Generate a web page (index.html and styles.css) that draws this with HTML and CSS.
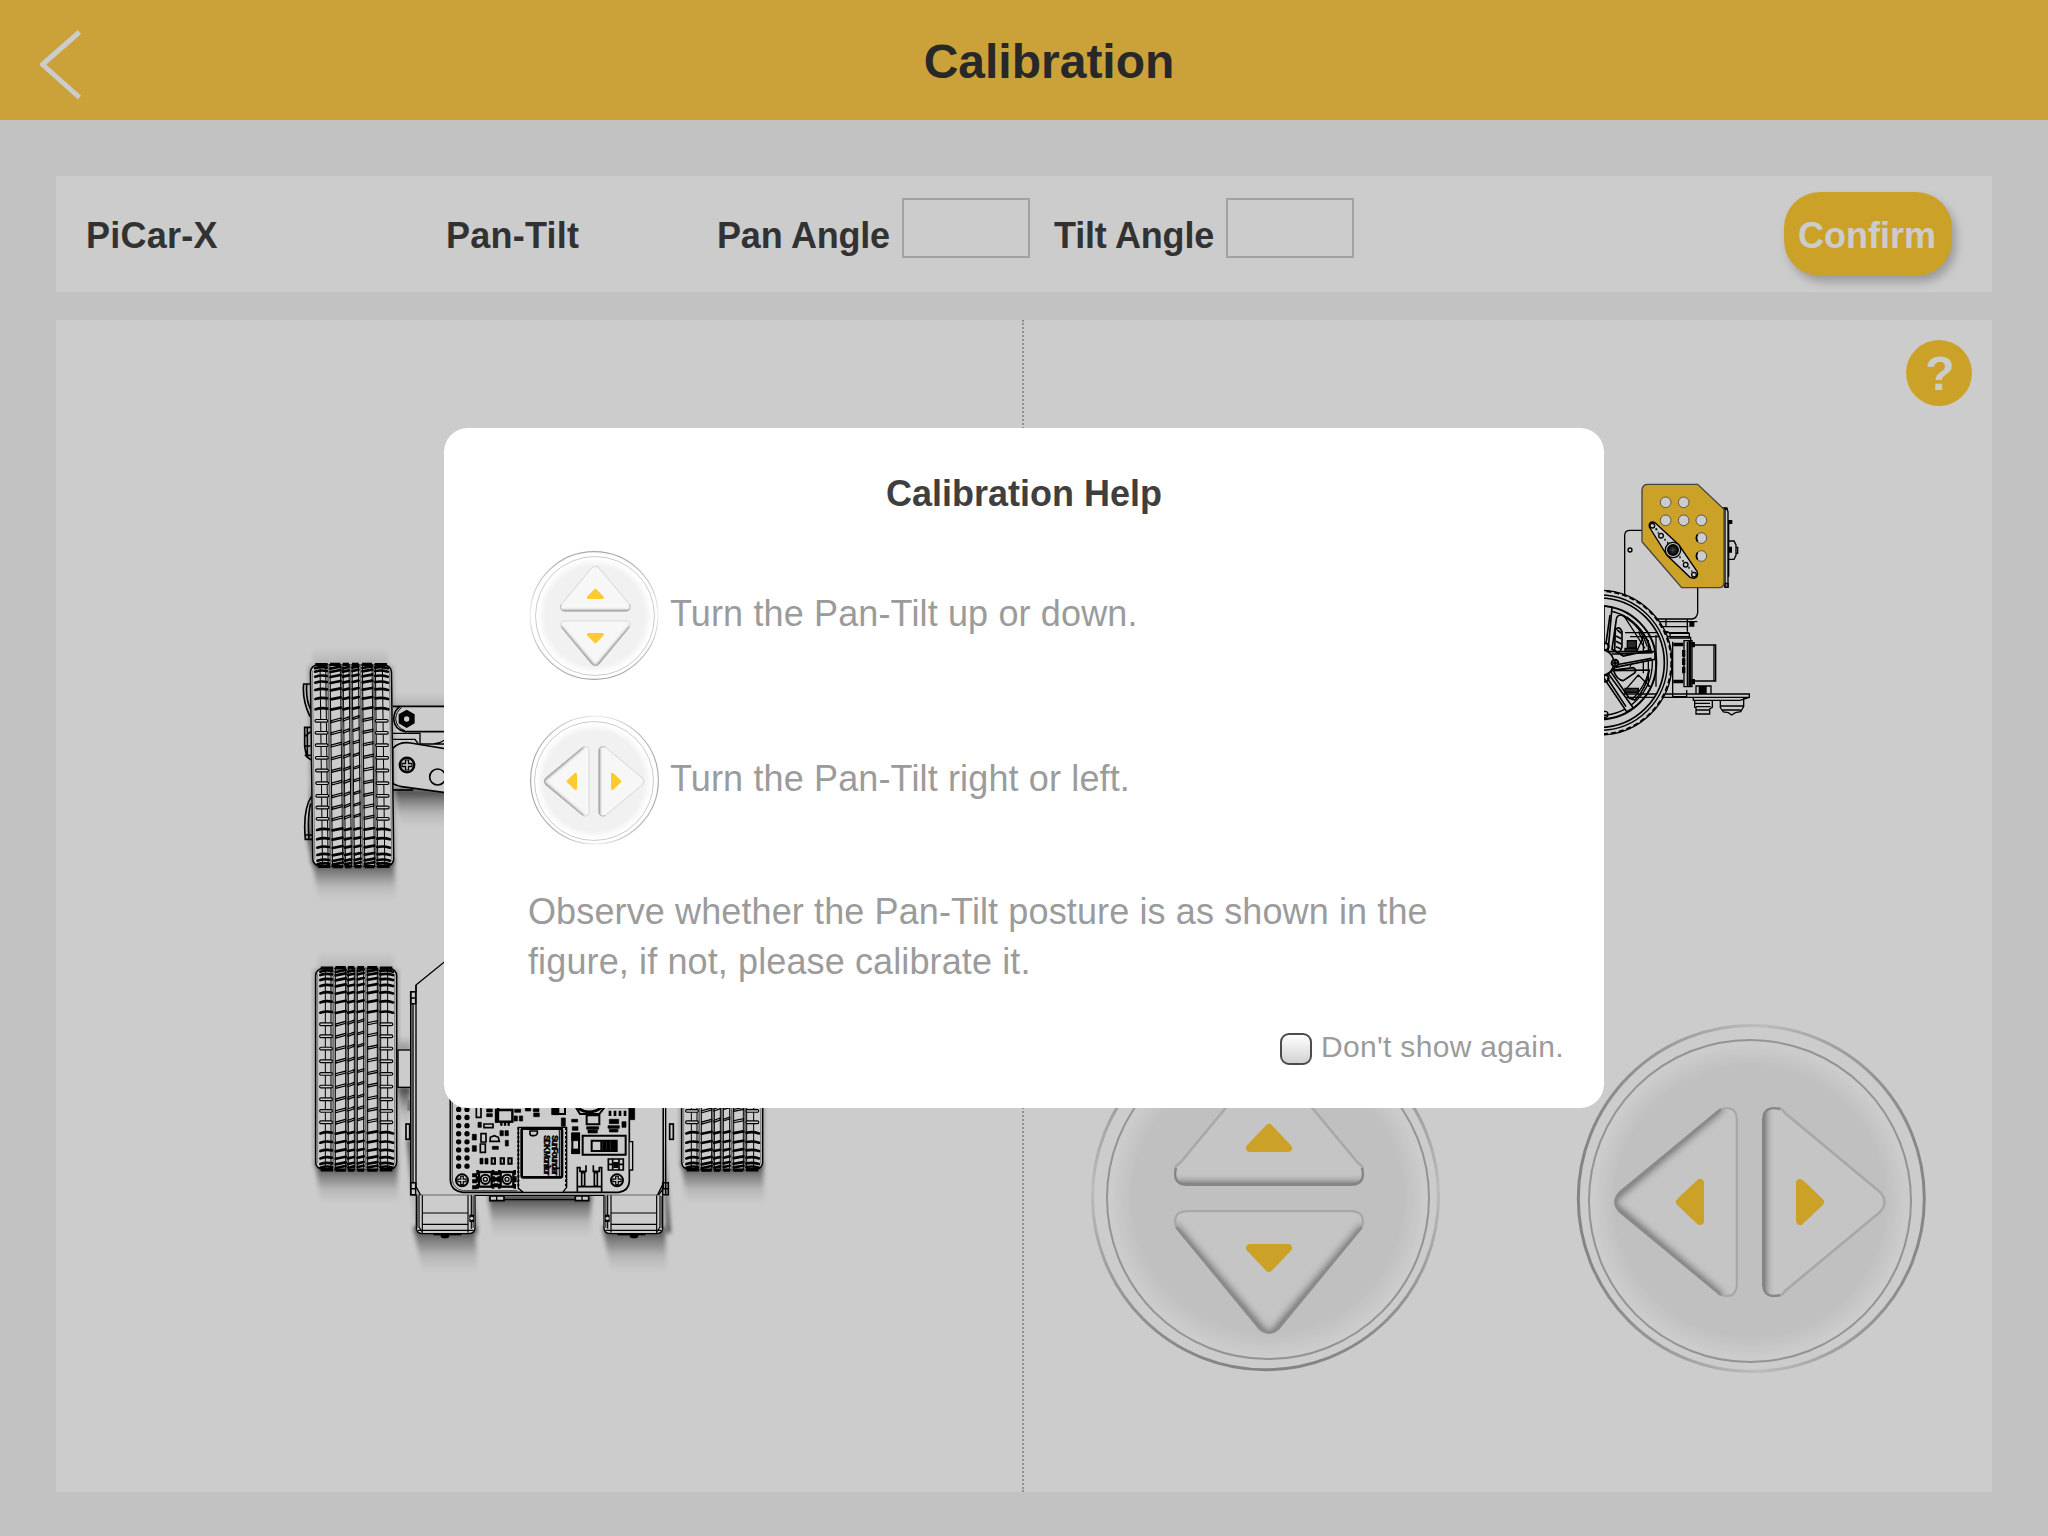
FILE: index.html
```html
<!DOCTYPE html>
<html lang="en">
<head>
<meta charset="utf-8">
<title>Calibration</title>
<link rel="stylesheet" href="styles.css">
</head>
<body>
<svg class="defs" aria-hidden="true">
  <defs>
    <linearGradient id="fall" x1="0" y1="0" x2="0" y2="1"><stop offset="0" stop-color="#000" stop-opacity=".7"/><stop offset=".3" stop-color="#000" stop-opacity=".38"/><stop offset=".65" stop-color="#000" stop-opacity=".1"/><stop offset="1" stop-color="#000" stop-opacity="0"/></linearGradient>
    <linearGradient id="rise" x1="0" y1="1" x2="0" y2="0"><stop offset="0" stop-color="#000" stop-opacity=".3"/><stop offset="1" stop-color="#000" stop-opacity="0"/></linearGradient>
    <filter id="soft" x="-20%" y="-20%" width="140%" height="140%"><feGaussianBlur stdDeviation="6"/></filter>
    <filter id="bevel" filterUnits="userSpaceOnUse" x="-150" y="-170" width="300" height="340"><feGaussianBlur stdDeviation="4"/></filter>
    <radialGradient id="dish"><stop offset="0" stop-color="#f1f1f1"/><stop offset=".84" stop-color="#f1f1f1"/><stop offset=".97" stop-color="#fff"/></radialGradient>
    <linearGradient id="rim" x1="0" y1="0" x2="0" y2="1"><stop offset="0" stop-color="#a8a8a8"/><stop offset=".25" stop-color="#c8c8c8"/><stop offset=".48" stop-color="#ececec"/><stop offset=".75" stop-color="#c0c0c0"/><stop offset="1" stop-color="#a4a4a4"/></linearGradient>
    <clipPath id="upClip"><path d="M-82 -12.7H84Q101 -15 92 -33L11 -130Q1 -141 -9 -130L-90 -33Q-99 -15 -82 -12.7Z"/></clipPath>
    <clipPath id="downClip"><path d="M-82 12.7H84Q101 15 92 33L11 130Q1 141 -9 130L-90 33Q-99 15 -82 12.7Z"/></clipPath>
    <symbol id="pad" viewBox="-176 -176 352 352" overflow="visible">
      <circle cx="-2.5" cy="-1.3" r="173" fill="#fff" stroke="url(#rim)" stroke-width="3"/>
      <circle r="161" fill="url(#dish)" stroke="#b9b9b9" stroke-width="2"/>
      <g clip-path="url(#upClip)">
        <rect x="-110" y="-150" width="220" height="150" fill="#f7f7f7"/>
        <path d="M-110 -10H110" stroke="#666" stroke-width="10" filter="url(#bevel)"/>
      </g>
      <path d="M-92 -29Q-94 -31 -88 -35L-9 -130Q1 -139 11 -130L90 -35Q96 -31 94 -29" fill="none" stroke="#d5d3cf" stroke-width="2.600"/>
      <path d="M-92 -30Q-96 -14 -82 -13.2H84Q98 -14 94 -30" fill="none" stroke="#a8a7a5" stroke-width="2.400"/>
      <g clip-path="url(#downClip)">
        <rect x="-110" y="0" width="220" height="150" fill="#f7f7f7"/>
        <path d="M-96 30L1 145L98 30" fill="none" stroke="#777" stroke-width="10" filter="url(#bevel)"/>
      </g>
      <path d="M-92 29Q-96 14 -82 13.2H84Q98 14 94 29" fill="none" stroke="#d3d1cd" stroke-width="2.200"/>
      <path d="M-92 29L-9 130Q1 139 11 130L94 29" fill="none" stroke="#b0aeaa" stroke-width="2.400"/>
      <path class="accent" d="M-18 -50L1 -70L20 -50Z"/>
      <path class="accent" d="M-18 50H20L1 70Z"/>
    </symbol>

    <!-- tyre seen from above, 250 x 616 units -->
    <g id="bar" fill="#fff" stroke="#000" stroke-width="3.600">
      <rect x="14" y="-3.500" width="38" height="8" rx="3.500"/>
      <path d="M62 6L92 -2V-8L62 0ZM99 1L117 -6V-12L99 -5ZM128 -4L146 -9V-15L128 -9ZM158 2L187 -4V-10L158 -4Z"/>
      <rect x="195" y="-3.500" width="38" height="8" rx="3.500"/>
    </g>
    <g id="band" fill="none" stroke="#000" stroke-width="8" stroke-linecap="round">
      <path d="M16 2Q34 -4 51 0M62 3L92 -3M99 2L117 -2M128 0L146 -4M158 1L187 -4M196 0Q215 -4 234 2"/>
    </g>
    <g id="tyre">
      <rect x="2" y="6" width="243" height="603" rx="22" fill="#fff" stroke="#000" stroke-width="4.500"/>
      <g fill="none" stroke="#000" stroke-width="3">
        <path d="M31 4V610M48 4V610M61 4V610M92 4V610M100 4V610M118 4V610M127 4V610M146 4V610M158 4V610M187 4V610M197 4V610M218 4V610"/>
        <path d="M8 22V590M239 22V590" stroke-width="1.200"/>
      </g>
      <path d="M55 4V610M96 4V610M123 4V610M152 4V610M192 4V610" stroke="#888" stroke-width="6"/>
      <path d="M17 5H54M61 4H92M99 4H118M127 4H147M157 4H187M195 5H232M17 610H54M61 611H92M99 611H118M127 611H147M157 611H187M195 610H232" stroke="#000" stroke-width="10"/>
      <use href="#band" y="14"/><use href="#band" y="24"/><use href="#band" y="39"/><use href="#band" y="57"/><use href="#band" y="79"/><use href="#band" y="106"/><use href="#band" y="137"/>
      <use href="#bar" y="173"/><use href="#bar" y="209"/><use href="#bar" y="246"/><use href="#bar" y="284"/><use href="#bar" y="322"/><use href="#bar" y="360"/><use href="#bar" y="398"/><use href="#bar" y="433"/><use href="#bar" y="467"/>
      <use href="#band" y="499"/><use href="#band" y="527"/><use href="#band" y="552"/><use href="#band" y="574"/><use href="#band" y="591"/><use href="#band" y="602"/>
    </g>
    <g id="tyreShade">
      <path d="M10 -45H235V10H10Z" fill="url(#rise)" opacity=".4" filter="url(#soft)"/>
      <rect x="-3" y="10" width="252" height="590" fill="#000" opacity=".28" filter="url(#soft)"/>
      <path d="M2 590H246L250 710H16Z" fill="url(#fall)" filter="url(#soft)"/>
    </g>
    <g id="screw"><circle r="18" fill="#fff" stroke="#000" stroke-width="6"/><path d="M-14 0H14M0 -14V14" stroke="#000" stroke-width="11"/><path d="M-11 0H11M0 -11V11" stroke="#fff" stroke-width="4"/></g>
    <g id="button"><rect x="-19" y="-22" width="38" height="44" fill="#fff" stroke="#000" stroke-width="7"/><path d="M-23 -28V-14M23 -28V-14M-23 28V14M23 28V14M-25 -9V9M25 -9V9" stroke="#000" stroke-width="8"/><circle r="14" fill="#fff" stroke="#000" stroke-width="6"/><circle r="6" fill="#fff" stroke="#000" stroke-width="4"/></g>
    <g id="foot">
      <path d="M0 0V98Q0 113 18 115H158Q176 113 176 98V0" fill="#fff" stroke="#000" stroke-width="4"/>
      <path d="M8 0V95L18 110M18 0V115M155 0V112M165 0V100M18 53H155M18 87H155M5 105H172" fill="none" stroke="#000" stroke-width="3.500"/>
      <path d="M2 2H7V98H2ZM168 2H174V98H168Z" fill="#777"/>
      <path d="M52 117H135" stroke="#000" stroke-width="6"/><ellipse cx="86" cy="122" rx="13" ry="7"/>
      <path d="M159 58h14v22h-14z"/><circle cx="166" cy="69" r="5" fill="#fff"/>
    </g>
  </defs>
</svg>

<div class="app">
  <header class="header">
    <button class="back" aria-label="Back"><svg width="44" height="72" viewBox="0 0 44 72"><path d="M39.500 3L2.500 35.500L39.500 68.500" fill="none" stroke="#fff" stroke-width="5"/></svg></button>
    <h1 class="heading">Calibration</h1>
  </header>

  <main class="main">
    <section class="toolbar">
      <span class="label wide">PiCar-X</span>
      <span class="label wide">Pan-Tilt</span>
      <label class="label tight" for="pan">Pan Angle</label>
      <input class="angle" id="pan">
      <label class="label tight" for="tilt">Tilt Angle</label>
      <input class="angle" id="tilt">
      <button class="confirm">Confirm</button>
    </section>

    <section class="stage">
      <div class="half half-left">
        <svg class="art" viewBox="56 320 966 1172">
          <!-- front wheel and steering arm -->
          <g transform="translate(290 640) scale(.33333)">
            <path d="M312 445L520 450V560H330Z" fill="url(#fall)" filter="url(#soft)"/>
            <path d="M310 160H520V205H310Z" fill="url(#rise)" opacity=".5" filter="url(#soft)"/>
            <path d="M40 340L66 470L52 600L72 690L60 440Z" fill="#000" opacity=".5" filter="url(#soft)"/>
            <path d="M60 132H41Q36 180 60 230M50 134Q47 180 62 208M62 262H44V320L50 350L64 360M44 290L62 275M44 318H62M44 346H62M52 262V350M64 470Q38 510 46 598H68M62 490Q52 530 57 595M46 585H66" fill="none" stroke="#000" stroke-width="5"/>
            <path d="M308 199H520V275H345Q313 268 311 237Q313 208 330 200Z" fill="#fff" stroke="#000" stroke-width="5"/>
            <path d="M335 203Q318 215 317 237Q319 262 345 272" fill="none" stroke="#000" stroke-width="3"/>
            <path d="M308 280H390V312H520M308 298H375L385 312M390 280V312M430 312Q450 310 465 300" fill="none" stroke="#000" stroke-width="4"/>
            <path d="M308 325Q330 304 362 309L520 335V465L335 440Q315 435 308 430Z" fill="#fff" stroke="#000" stroke-width="5"/>
            <path d="M308 450H370" stroke="#000" stroke-width="5"/>
            <path d="M350 209L374 223V250L350 264L326 250V223Z"/><circle cx="350" cy="237" r="8" fill="#fff"/>
            <use href="#screw" transform="translate(351 375) scale(1.200)"/>
            <circle cx="443" cy="411" r="24" fill="#fff" stroke="#000" stroke-width="5"/>
            <g transform="translate(59 69) skewX(.7)"><use href="#tyreShade"/><use href="#tyre"/></g>
          </g>
          <!-- rear wheels -->
          <g transform="translate(315 966.400) scale(.33333)"><use href="#tyreShade"/><use href="#tyre"/></g>
          <g transform="translate(681 966.400) scale(.33333)"><use href="#tyreShade"/><use href="#tyre"/></g>
          <!-- chassis -->
          <g transform="translate(300 940) scale(.33333)">
            <path d="M295 440H332V560H306Z" fill="url(#fall)" filter="url(#soft)"/>
            <path d="M294 290H332V332H294Z" fill="url(#rise)" filter="url(#soft)"/>
            <path d="M340 860H525L533 995H368Z" fill="url(#fall)" filter="url(#soft)"/>
            <path d="M908 860H1095L1100 995H932Z" fill="url(#fall)" filter="url(#soft)"/>
            <path d="M565 765H875L870 890H580Z" fill="url(#fall)" filter="url(#soft)"/>
            <path d="M322 600L352 900L340 760L334 600ZM520 770L532 880L524 880ZM1088 560L1112 880H1100Z" fill="#000" opacity=".7" filter="url(#soft)"/>
            <rect x="294" y="330" width="38" height="112" fill="#fff" stroke="#000" stroke-width="4"/>
            <rect x="318" y="552" width="11" height="46" fill="#fff" stroke="#000" stroke-width="5"/>
            <rect x="322" y="480" width="10" height="32" fill="#999"/>
            <path d="M348 135L450 52H1000L1090 130V745L1075 766H360L332 764V155H348Z" fill="#fff" stroke="#000" stroke-width="4"/>
            <path d="M348 135V740L362 766M339 190V730M332 155V764M1097 150V765M1090 150V730L1072 766" fill="none" stroke="#000" stroke-width="4"/>
            <path d="M332 155h15v36h-15zM332 174h15M332 728h15v36h-15zM332 746h15M1088 728h17v36h-17zM1088 746h17" fill="none" stroke="#000" stroke-width="4.500"/>
            <rect x="1109" y="552" width="11" height="46" fill="#fff" stroke="#000" stroke-width="5"/>
            <path d="M570 768h42v14h-42zM826 768h40v14h-40z" fill="#fff" stroke="#000" stroke-width="5"/>
            <path d="M612 779H826M590 768v14M846 768v14" stroke="#000" stroke-width="4"/>
            <use href="#foot" x="349" y="766"/>
            <use href="#foot" transform="translate(1088 766) scale(-1 1)"/>
          </g>
          <!-- controller board -->
          <g transform="translate(430 1090) scale(.33333)">
            <path d="M61 0V270Q63 303 98 307H566Q596 303 598 275V0Z" fill="#fff" stroke="#000" stroke-width="5"/>
            <path d="M67 0V270Q70 297 100 302H262" fill="none" stroke="#000" stroke-width="2"/>
            <path d="M86 34V230M111 34V230" stroke="#000" stroke-width="16" stroke-linecap="round" stroke-dasharray="0 24.300" fill="none"/>
            <use href="#screw" x="96" y="271"/><use href="#screw" x="561" y="271"/>
            <use href="#button" x="166" y="268"/><use href="#button" x="231" y="268"/>
            <path d="M198 244v12M198 262v12M198 280v12M134 250v12M134 268v12M134 286v12" stroke="#000" stroke-width="15"/>
            <!-- small parts -->
            <g fill="#fff" stroke="#000" stroke-width="5">
              <path d="M139 50h14v32h-14zM198 60h49v35h-49zM162 102h27v11h-27zM153 131h15v25h-15zM151 162h15v25h-15zM181 142l12 -5 12 5 3 12h-28z"/>
              <path d="M198 60h49v35h-49zM204 53v44M214 95v12M225 95v12M236 95v12" stroke-width="7"/>
              <path d="M185 205h10v16h-10zM212 205h10v16h-10zM235 205h10v16h-10z" stroke-width="6"/>
            </g>
            <path stroke="#000" stroke-width="2" d="M170 57h17v9h-17zM170 71h17v9h-17zM144 97h10v15h-10zM127 133h12v17h-12zM127 167h12v17h-12zM210 122h10v15h-10zM225 122h10v15h-10zM226 151h9v17h-9zM187 169h18v9h-18zM150 205h9v17h-9zM165 205h9v17h-9zM252 78h10v15h-10zM268 78h10v15h-10zM254 58h18v9h-18zM286 54h16v9h-16zM310 56h17v9h-17zM311 69h17v11h-17z"/>
            <!-- wireless module -->
            <path d="M265 112H410V292L398 307H280L265 295Z" fill="#fff" stroke="#000" stroke-width="4"/>
            <path d="M265 112V290M408 112V290" stroke="#000" stroke-width="6" stroke-dasharray="8 5"/>
            <rect x="275" y="116" width="121" height="146" rx="5" fill="#fff" stroke="#000" stroke-width="8"/>
            <path d="M300 123h22v8q-3 6 -9 6h-5q-8 0 -8 -6z" fill="#fff" stroke="#000" stroke-width="5"/>
            <g class="chip-text"><text transform="translate(366 136) rotate(90)" textLength="120">SunFounder</text><text transform="translate(341 136) rotate(90)" textLength="120">SDK Monitor</text></g>
            <path d="M388 120V260" stroke="#000" stroke-width="3"/>
            <!-- components above the switch -->
            <g fill="#fff" stroke="#000" stroke-width="6">
              <path d="M372 20h33v52h-33zM430 40L450 72H508L525 50M470 76h38v27h-38zM533 52h62V20"/>
              <path d="M445 55Q480 78 515 52M540 62v16M555 62v16M570 62v16M585 62v16" fill="none" stroke-width="8"/>
              <path d="M427 132h20v57h-20z"/>
              <path d="M458 137h129v57H458z"/><path d="M485 152h75v31h-75z"/>
              <path d="M599 155h9v85h-9" stroke-width="4"/>
            </g>
            <path stroke="#000" stroke-width="2" d="M365 45h22v29h-22zM512 152h48v31h-48zM425 128h24v24h-24zM425 177h24v14h-24zM470 110h36v8h-36zM474 120h28v9h-28zM538 88h28v13h-28zM534 107h34v8h-34zM538 118h26v8h-26zM576 95h12v17h-12zM425 88h18v8h-18zM427 110h17v11h-17zM394 84h12v25h-12zM599 55h15v34h-15z"/>
            <path d="M517 153v28M529 153v28M541 153v28" stroke="#444" stroke-width="2"/>
            <path d="M535 207h45v33h-45zM548 207v33M567 207v33M535 223h45" fill="#fff" stroke="#000" stroke-width="5"/><path d="M550 216h15v18h-15z"/>
            <path d="M442 305V233H450V244H468V226M515 305V233H508V244H490V226M468 226V244M490 226V244M442 290H515M455 248h9v40h-9zM493 248h9v40h-9z" fill="none" stroke="#000" stroke-width="5"/>
          </g>
        </svg>
      </div>

      <div class="half half-right">
        <button class="help" aria-label="Help">?</button>
        <svg class="side" viewBox="1024 406 968 616">
          <g transform="translate(1590 470) scale(.33333)" fill="none" stroke="#000" stroke-width="4">
            <path d="M104 375V195Q105 181 120 181H156M323 350V428Q321 445 306 447H200"/>
            <circle cx="120" cy="240" r="6"/>
            <!-- camera edge -->
            <path d="M396 114H410L414 125V350H405V120M416 150V320M414 213H432L438 225V256L432 268H414M438 232h5v18h-5"/>
            <path d="M416 150h11v12h-11zM416 230h10v18h-10zM398 113h15v7h-15z" fill="#000" stroke="none"/>
            <path d="M405 340h9v12h-9z" fill="#888"/>
            <!-- pan-tilt plate -->
            <path d="M172 43H323L402 118V340Q400 353 388 353H275L156 215V60Q157 44 172 43Z" fill="#ffca31" stroke="#555"/>
            <g fill="#fff" stroke="#555" stroke-width="2.500"><circle cx="227" cy="97" r="16"/><circle cx="281" cy="97" r="16"/><circle cx="227" cy="151" r="16"/><circle cx="281" cy="151" r="16"/><circle cx="334" cy="151" r="16"/><circle cx="334" cy="204" r="16"/><circle cx="334" cy="258" r="16"/></g>
            <path d="M323 193Q316 204 323 215M323 247Q316 258 323 269" stroke-width="5"/>
            <path d="M178 171Q175 155 190 156L197 160L267 225L321 304Q327 321 312 325L300 322L231 256Z" fill="#fff"/>
            <g stroke-width="4"><circle cx="187" cy="167" r="7"/><circle cx="213" cy="197" r="7"/><circle cx="287" cy="284" r="7"/><circle cx="312" cy="314" r="7"/><path d="M196 178h3v3M203 188h3M223 209h4M231 218h4M268 262h4M277 273h4M295 293h4M304 304h3" stroke-width="6"/></g>
            <circle cx="249" cy="240" r="23" fill="#fff"/><circle cx="249" cy="240" r="15" fill="#222" stroke-width="6"/><path d="M241 240h16M249 232v16" stroke="#777" stroke-width="2"/>
            <!-- body -->
            <path d="M200 455H322M210 470H295M228 447V470M292 447V485M105 488H297M120 500H297M292 515V650M302 500V650M210 488Q230 480 240 490M248 515V680M160 515V610M175 510V650M198 495V650M120 590L160 500M145 485L160 515"/>
            <path d="M240 490h58v14h-58zM282 512h16v138h-16zM297 512h9v138h-9zM309 525H377V633H309M372 525V633"/>
            <path d="M298 455h15v15h-15zM250 518h30v11h-30zM304 516h11v16h-11zM250 629h30v11h-30zM304 627h11v16h-11zM276 540h10v20h-10zM276 565h10v20h-10zM276 590h10v20h-10z" fill="#000" stroke="none"/>
            <path d="M112 512h27v22h-27zM105 535h35v12h-35zM105 655h40v12h-40z" fill="#333"/>
            <path d="M90 672H478V682H90M318 672V648H363V672M310 682V691H450L478 682M314 691V712H318V732H359V717L367 712V693M314 700H360M318 710H362M318 720H358M391 693V713L400 726L415 728L425 735L436 728L452 725L461 710V682M391 708H461M398 720H452M248 680H290V660M110 655L145 615L180 650"/>
            <path d="M328 650h20v20h-20z" fill="#000"/>
            <!-- wheel -->
            <g>
              <path d="M29 361A217 217 0 0 1 29 795A217 217 0 0 1 29 361M29 384A194 194 0 0 0 29 772A194 194 0 0 0 29 384" fill="#fff" stroke="none"/>
              <path d="M29 361A217 217 0 0 1 29 795M29 375A203 203 0 0 1 29 781" stroke-width="4"/>
              <circle cx="29" cy="578" r="215" stroke-width="6" stroke-dasharray="15 9"/>
              <circle cx="29" cy="578" r="194" stroke-width="5"/><circle cx="29" cy="578" r="170" stroke-width="6"/><circle cx="29" cy="578" r="158"/>
              <path d="M42 408L66 412L54 545L195 545V568L76 592L55 611L130 714L110 725L42 625V520Z" fill="#fff" stroke-width="5"/>
              <path d="M60 435L48 520M65 552L188 548M75 585L185 565M52 625L108 710M95 435Q78 434 78 455L66 538L100 558L182 540Q165 475 95 435ZM76 480Q88 465 96 485V530Q88 558 74 540ZM60 602L178 600Q170 655 135 690L118 685ZM70 600L130 593Q142 598 134 609L100 632Q80 630 70 600Z" stroke-width="5"/>
              <path d="M82 480l12 10M78 498l16 8M78 514l16 8M78 530l14 6" stroke-width="5"/>
              <path d="M100 435L165 535M110 440Q155 475 172 530M125 690Q165 650 176 605"/>
              <path d="M20 541A39 39 0 1 1 20 615" fill="#fff" stroke-width="5"/>
              <circle cx="75" cy="579" r="10" fill="#fff" stroke-width="6"/><circle cx="75" cy="579" r="4" fill="#000"/>
              <circle cx="46" cy="530" r="10" stroke-width="6"/><circle cx="46" cy="625" r="10" stroke-width="6"/><circle cx="45" cy="733" r="9"/>
            </g>
          </g>
        </svg>
        <div class="pads">
          <svg class="pad"><use href="#pad" width="352" height="352"/></svg>
          <svg class="pad pad-turn"><use href="#pad" width="352" height="352"/></svg>
        </div>
      </div>
    </section>
  </main>

  <div class="overlay">
    <div class="dialog">
      <h2 class="dialog-title">Calibration Help</h2>
      <div class="tip"><svg class="tip-pad"><use href="#pad" width="130" height="130"/></svg><span class="tip-text">Turn the Pan-Tilt up or down.</span></div>
      <div class="tip"><svg class="tip-pad pad-turn"><use href="#pad" width="130" height="130"/></svg><span class="tip-text">Turn the Pan-Tilt right or left.</span></div>
      <p class="note">Observe whether the Pan-Tilt posture is as shown in the figure, if not, please calibrate it.</p>
      <label class="again"><input class="check" type="checkbox"><span class="again-text">Don't show again.</span></label>
    </div>
  </div>
</div>
</body>
</html>
```
FILE: styles.css
```css
* { box-sizing: border-box; }
body { margin: 0; font-family: "Liberation Sans", Arial, Helvetica, sans-serif; color: #3f3f3f; }
button { border: 0; padding: 0; background: none; font: inherit; }
h1, h2, p { margin: 0; }
svg { display: block; }
.defs { position: absolute; width: 0; height: 0; }

.app { position: relative; width: 2048px; height: 1536px; background: #f3f3f3; overflow: hidden; }
.header { display: grid; grid-template-columns: 100px 1fr; align-items: center; height: 120px; background: #feca48; }
.back { padding: 9px 0 0 40px; }
.heading { padding: 3px 50px 0 0; font-size: 48px; line-height: 56px; text-align: center; color: #333; }

.main { padding: 56px 56px 44px; }
.toolbar { display: grid; grid-template-columns: 360px 271px 185px 152px 172px 128px 1fr; align-items: center; height: 116px; padding: 0 40px 0 30px; background: #fff; }
.label { padding-top: 3px; font-size: 36px; font-weight: 700; line-height: 42px; white-space: nowrap; }
.wide { letter-spacing: .25px; }
.tight { letter-spacing: -.2px; }
.angle { width: 128px; height: 60px; margin: 0 0 12px; padding: 0 10px; border: 2px solid #cbcbcb; background: #fff; font-size: 32px; }
.confirm { justify-self: end; width: 168px; height: 84px; padding: 3px 2px 0 0; border-radius: 36px; background: #ffca31; box-shadow: 4px 6px 10px rgba(0, 0, 0, .24); color: #fff; font-size: 36px; font-weight: 700; }

.stage { display: grid; grid-template-columns: 968px 968px; height: 1172px; margin-top: 28px; background: #fff; }
.half { height: 1172px; }
.half-left { border-right: 2px dotted #b4b4b4; }
.half-right { display: flex; flex-direction: column; align-items: flex-start; padding-top: 20px; }
.art { width: 966px; height: 1172px; }
.side { width: 968px; height: 616px; }
.help { align-self: flex-end; width: 66px; height: 66px; margin-right: 20px; padding: 2px 0 0 2px; border-radius: 50%; background: #ffca31; color: #fff; font-size: 48px; font-weight: 700; line-height: 64px; }
.pads { display: flex; gap: 130px; padding-left: 68px; }
.pad { width: 352px; height: 352px; overflow: visible; }
.pads .pad-turn { margin-top: 3px; }
.pad-turn { transform: rotate(90deg); }
.accent { fill: #ffca31; stroke: #ffca31; stroke-width: 8px; stroke-linejoin: round; }
.chip-text { font-size: 26px; font-weight: 700; stroke: #000; stroke-width: 1.5px; }

.overlay { position: absolute; inset: 0; display: flex; align-items: center; justify-content: center; background: rgba(0, 0, 0, .2); }
.dialog { width: 1160px; height: 680px; padding: 46px 40px 0 84px; border-radius: 24px; background: #fff; color: #9b9b9b; }
.dialog-title { margin-right: 44px; font-size: 36px; line-height: 40px; text-align: center; color: #3f3f3f; }
.tip { display: flex; align-items: center; gap: 10px; height: 130px; margin-top: 35px; padding-left: 2px; }
.dialog-title + .tip { margin-top: 37px; }
.tip + .tip { padding-left: 1px; gap: 11px; }
.tip-pad { width: 130px; height: 130px; overflow: visible; }
.tip-text { padding-bottom: 4px; font-size: 36px; line-height: 42px; letter-spacing: .14px; }
.note { width: 930px; margin-top: 41px; font-size: 36px; line-height: 50px; letter-spacing: .12px; }
.again { display: flex; align-items: center; justify-content: flex-end; gap: 9px; margin-top: 43px; font-size: 30px; line-height: 34px; letter-spacing: .32px; }
.again-text { padding-bottom: 3px; }
.check { appearance: none; width: 32px; height: 32px; margin: 0; border: 2px solid #4c4c4c; border-radius: 9px; background: linear-gradient(#fff, #d2d2d2); }
```
